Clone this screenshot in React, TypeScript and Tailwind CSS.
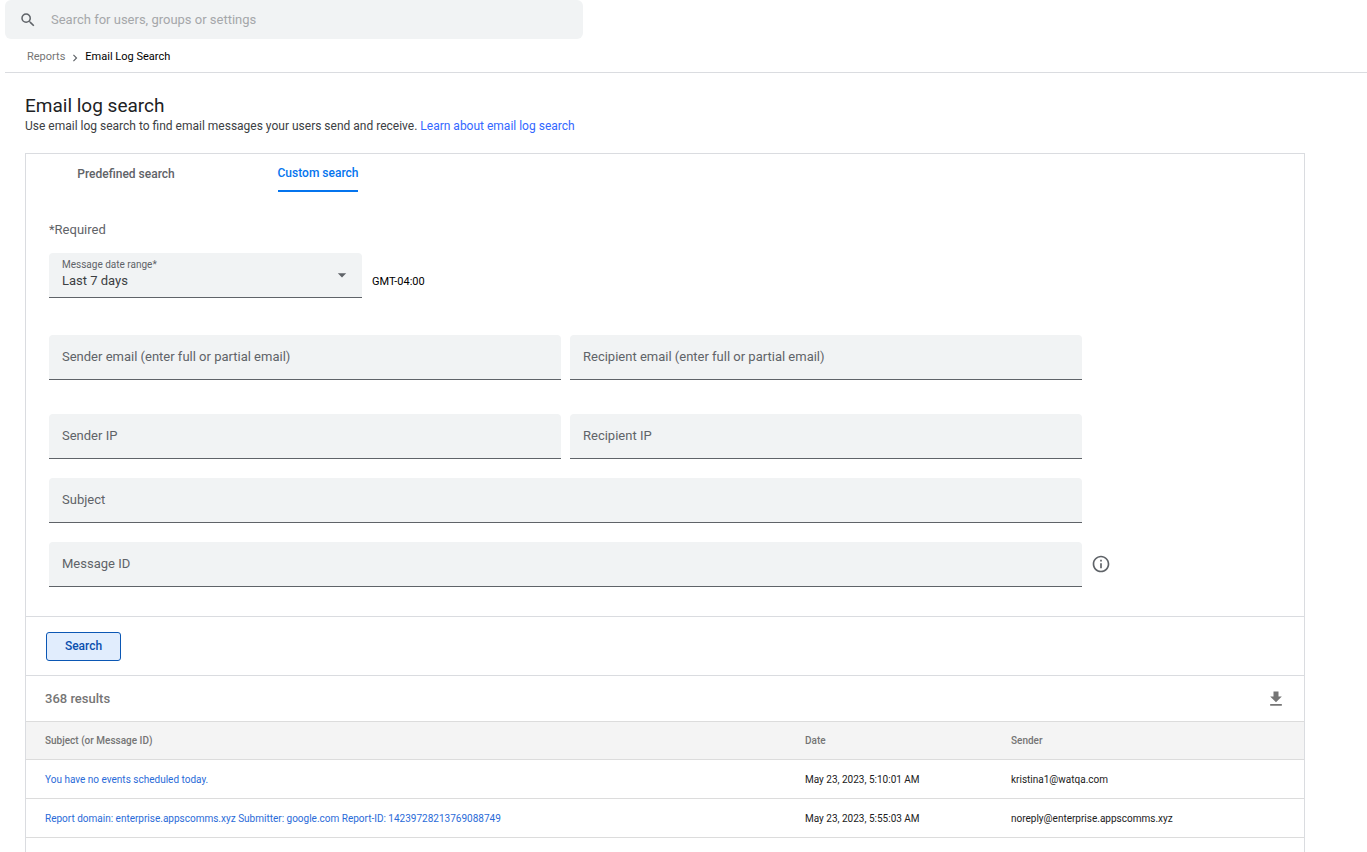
import { MdSearch, MdChevronRight, MdArrowDropDown, MdInfoOutline, MdDownload } from "react-icons/md"

const results = [
    {
        subject: "You have no events scheduled today.",
        date: "May 23, 2023, 5:10:01 AM",
        sender: "kristina1@watqa.com",
    },
    {
        subject: "Report domain: enterprise.appscomms.xyz Submitter: google.com Report-ID: 14239728213769088749",
        date: "May 23, 2023, 5:55:03 AM",
        sender: "noreply@enterprise.appscomms.xyz",
    },
]

// Filled text field, the label sits inside the box until something is typed
function Field({ id, label }: { id: string; label: string }) {
    return (
        <div className="relative flex-1">
            <input
                id={id}
                type="text"
                placeholder=" "
                className="peer block w-full h-[45px] px-[13px] pb-0.5 bg-[#f1f3f4] border-b border-[#5f6368] rounded-t text-[13px] text-[#3c4043] outline-none"
            />
            <label
                htmlFor={id}
                className="absolute left-[13px] top-3 text-[13px] leading-5 text-[#5f6368] pointer-events-none invisible peer-placeholder-shown:visible"
            >
                {label}
            </label>
        </div>
    )
}

function TopBar() {
    return (
        <header className="pl-[5px]">
            <div className="flex items-center gap-3.5 w-full max-w-[578px] h-[39px] pl-3.5 bg-[#f1f3f4] rounded-md">
                <MdSearch className="w-[18px] h-[18px] text-[#5f6368]" />
                <input
                    type="search"
                    aria-label="Search for users, groups or settings"
                    placeholder="Search for users, groups or settings"
                    className="flex-1 bg-transparent text-[13px] placeholder:text-[#a5a7aa] placeholder:opacity-100 outline-none"
                />
            </div>
            <nav className="flex items-center gap-[3px] h-[34px] pl-[22px] pt-1 border-b border-[#dadce0] text-[11px]">
                <a href="#reports" className="text-[#757575]">Reports</a>
                <MdChevronRight className="w-3.5 h-3.5 text-[#5f6368]" />
                <span className="text-black">Email Log Search</span>
            </nav>
        </header>
    )
}

function Tabs() {
    return (
        <div role="tablist" className="flex h-[38px] font-medium text-xs">
            <div className="flex w-[200px] justify-center">
                <button role="tab" aria-selected="false" className="pt-0.5 text-[#5f6368]">Predefined search</button>
            </div>
            <div className="flex w-[184px] justify-center">
                <button role="tab" aria-selected="true" className="pt-0.5 border-b-2 border-[#0474ee] text-[#0474ee]">
                    Custom search
                </button>
            </div>
        </div>
    )
}

function SearchForm() {
    return (
        <form onSubmit={(e) => e.preventDefault()}>
            <div className="pl-[23px] pb-[29px] pt-7">
                <p className="text-[13px] leading-5 text-[#5f6368]">*Required</p>
                <div className="flex items-center gap-2.5 mt-[13px]">
                    <div className="relative w-[313px]">
                        <label htmlFor="range" className="absolute left-[13px] top-1.5 text-[10px] leading-3 text-[#5f6368]">
                            Message date range*
                        </label>
                        <select
                            id="range"
                            className="appearance-none block w-full h-[45px] px-[13px] pt-3 bg-[#f1f3f4] border-b border-[#5f6368] rounded-t text-[13px] text-[#3c4043] outline-none"
                        >
                            <option>Last 7 days</option>
                        </select>
                        <MdArrowDropDown className="absolute right-2.5 top-3 w-5 h-5 text-[#5f6368] pointer-events-none" />
                    </div>
                    <span className="pt-3.5 text-[11px] text-black">GMT-04:00</span>
                </div>
                <div className="flex gap-[9px] mt-[37px] pr-[222px]">
                    <Field id="sender-email" label="Sender email (enter full or partial email)" />
                    <Field id="recipient-email" label="Recipient email (enter full or partial email)" />
                </div>
                <div className="flex gap-[9px] mt-[34px] pr-[222px]">
                    <Field id="sender-ip" label="Sender IP" />
                    <Field id="recipient-ip" label="Recipient IP" />
                </div>
                <div className="flex mt-[19px] pr-[222px]">
                    <Field id="subject" label="Subject" />
                </div>
                <div className="flex items-center mt-[19px]">
                    <Field id="message-id" label="Message ID" />
                    <div className="flex w-[222px] pl-[9px] pb-px">
                        <button type="button" aria-label="About message ID">
                            <MdInfoOutline className="w-5 h-5 text-[#5f6368]" />
                        </button>
                    </div>
                </div>
            </div>
            <div className="flex items-center h-[59px] pl-5 border-t border-[#dadce0]">
                <button
                    type="submit"
                    className="w-[75px] h-[29px] bg-[#e1edfd] border border-[#0b57b4] rounded-[3px] text-xs font-medium text-[#0b4fae]"
                >
                    Search
                </button>
            </div>
        </form>
    )
}

function Results() {
    return (
        <section>
            <div className="flex items-center justify-between h-[46px] pl-[19px] pr-[18px] border-t border-[#dadce0]">
                <h2 className="text-[13px] font-medium text-[#757575]">368 results</h2>
                <button aria-label="Download results">
                    <MdDownload className="w-5 h-5 text-[#757575]" />
                </button>
            </div>
            <table className="w-full table-fixed text-left text-[10px] text-[#212121]">
                <thead>
                    <tr className="h-[38px] bg-[#f4f4f4] border-y border-[#dcdcdc] text-[#757575]">
                        <th className="pl-[19px] font-medium">Subject (or Message ID)</th>
                        <th className="w-[206px] pl-[19px] font-medium">Date</th>
                        <th className="w-[312px] pl-[19px] font-medium">Sender</th>
                    </tr>
                </thead>
                <tbody>
                    {results.map((row) => (
                        <tr key={row.subject} className="h-[39px] border-b border-[#dcdcdc]">
                            <td className="pl-[19px]">
                                <a href="#message" className="text-[#2a6bd8]">{row.subject}</a>
                            </td>
                            <td className="pl-[19px]">{row.date}</td>
                            <td className="pl-[19px]">{row.sender}</td>
                        </tr>
                    ))}
                </tbody>
            </table>
        </section>
    )
}

export default function App() {
    return (
        <div className="flex flex-col min-h-screen bg-white font-[Roboto,'Liberation_Sans',sans-serif]">
            <TopBar />
            <main className="flex flex-col flex-1 pl-[25px] pr-[62px] pt-[21px]">
                <h1 className="text-[19px] leading-6 text-[#202124]">Email log search</h1>
                <p className="text-xs leading-4 text-[#3c4043]">
                    Use email log search to find email messages your users send and receive.{" "}
                    <a href="#learn" className="text-[#3367ff]">Learn about email log search</a>
                </p>
                <div className="flex-1 mt-[19px] border-x border-t border-[#dadce0]">
                    <Tabs />
                    <SearchForm />
                    <Results />
                </div>
            </main>
        </div>
    )
}
